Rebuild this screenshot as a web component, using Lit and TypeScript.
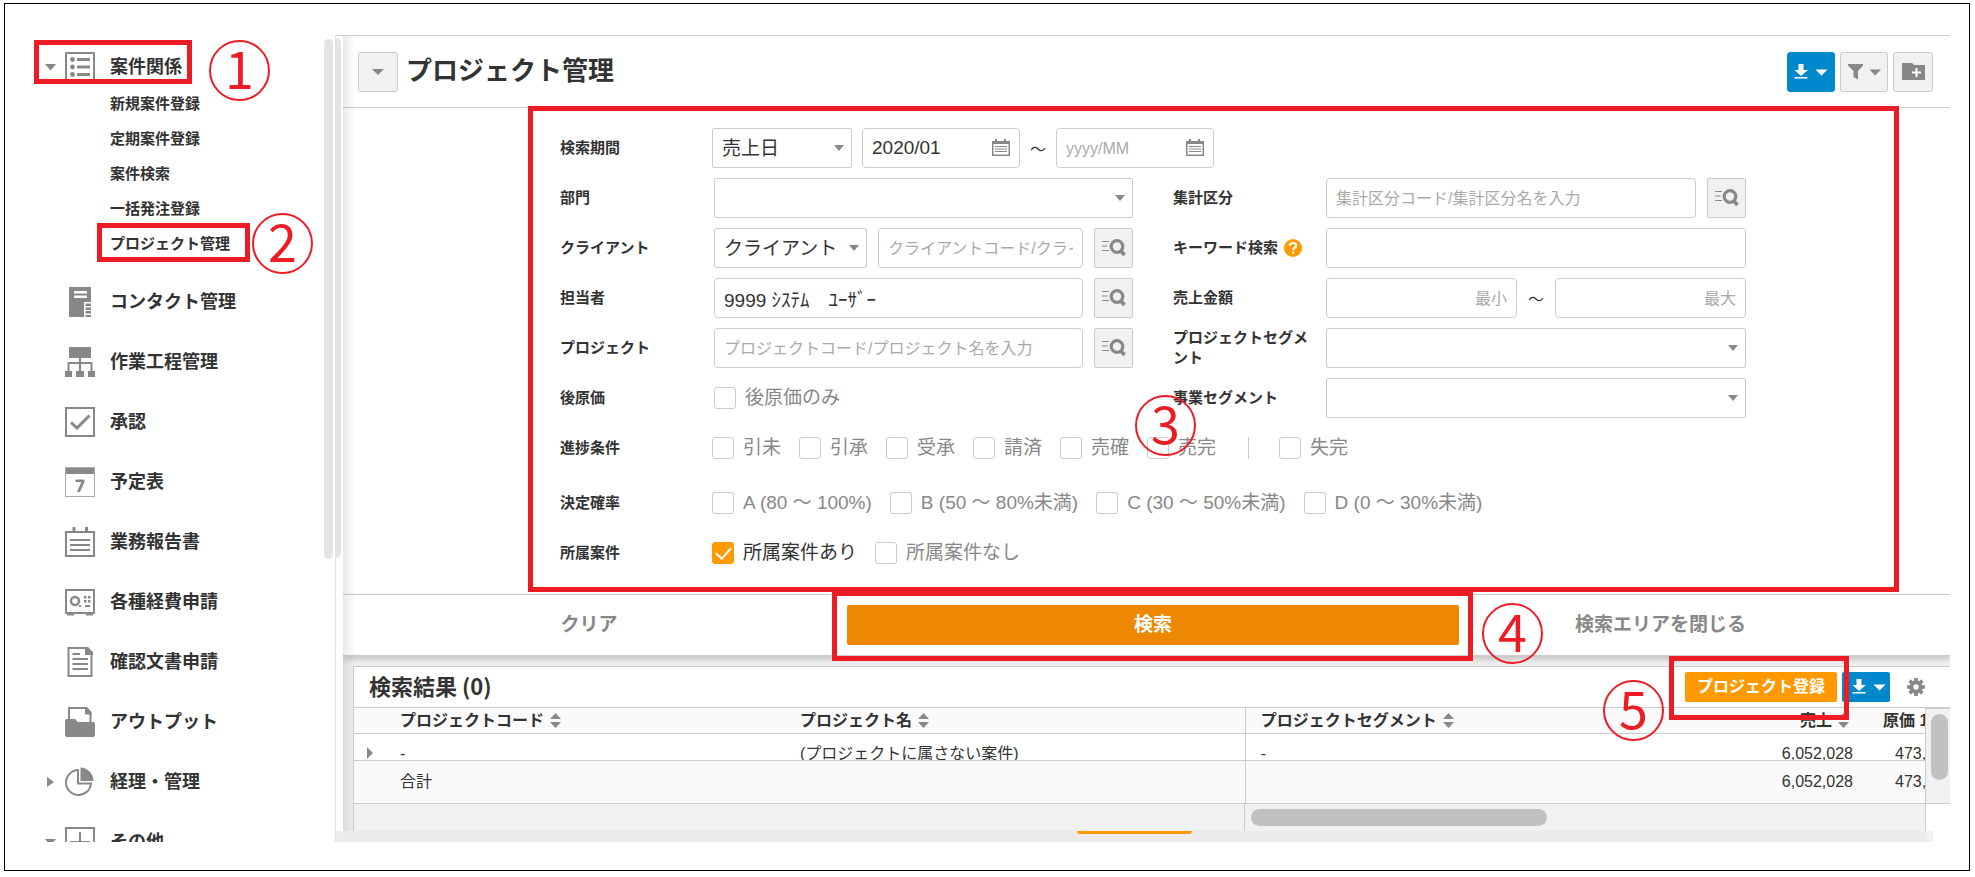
import { LitElement, html, css, svg, nothing } from "lit";
import { customElement } from "lit/decorators.js";
import { classMap } from "lit/directives/class-map.js";

const icons: Record<string, unknown> = {
  list: svg`<rect x="1" y="1" width="28" height="28" fill="none" stroke="#888" stroke-width="2"/>
    <circle cx="7.5" cy="7.5" r="2.4"/><circle cx="7.5" cy="15" r="2.4"/><circle cx="7.5" cy="22.5" r="2.4"/>
    <path d="M12 6h13v3H12zM12 13.500h13v3H12zM12 21h13v3H12z"/>`,
  contact: svg`<path fill-rule="evenodd" d="M4 0h22v15h-7v15H4zM9 4v2.500h13V4zM9 8.500V11h13V8.500z"/>
    <path d="M20.500 16.500H26v2.500h-5.500zM20.500 20.500H26V23h-5.500zM20.500 24H26v2.500h-5.500zM20.500 28H26v2h-5.500z"/>`,
  flow: svg`<path d="M4 0h22v11H4zM0 24h7v6H0zM11 24h8v6h-8zM23 24h7v6h-7z"/>
    <path d="M15 10v15M3.500 25v-9h23v9" fill="none" stroke="#888" stroke-width="2"/>`,
  check: svg`<rect x="1" y="1" width="28" height="28" fill="none" stroke="#888" stroke-width="2"/>
    <path d="M6 15.500l6 5.500L24.500 8.500" fill="none" stroke="#888" stroke-width="3"/>`,
  calendar: svg`<rect x="0.500" y="0.500" width="29" height="29" fill="#fff" stroke="#aaa"/>
    <path d="M1 1h28v6H1z"/><path d="M10.500 12.500h9v2.500l-4.500 10h-3l4.300-10h-5.800z"/>`,
  report: svg`<path d="M1 5h28v24H1z" fill="none" stroke="#888" stroke-width="2"/>
    <path d="M7.500 0h3v6h-3zM20 0h3v6h-3zM5 12h20v2H5zM5 17h20v2H5zM5 22h20v2H5z"/>`,
  safe: svg`<rect x="1" y="3" width="28" height="23" fill="none" stroke="#888" stroke-width="2"/>
    <circle cx="10" cy="14" r="4" fill="none" stroke="#888" stroke-width="2.500"/>
    <path d="M2 26h7v2.500H2zM21 26h7v2.500h-7zM14 18h2v2h-2zM19 9h2.500v2.500H19zM23 9h2.500v2.500H23zM19 13h2.500v2.500H19zM23 13h2.500v2.500H23zM20 18h5v2h-5z"/>`,
  document: svg`<path d="M3.500 1h18l5 5v23h-23z" fill="none" stroke="#888" stroke-width="2"/>
    <path d="M20 0h3l5 5v3h-8zM7.500 6h7.500v2H7.500zM7.500 11h15.500v2H7.500zM7.500 16h15.500v2H7.500zM7.500 21h15.500v2H7.500z"/>`,
  output: svg`<path d="M4 14V1h17l4.500 5v10" fill="none" stroke="#888" stroke-width="2"/>
    <path d="M20 0h2l4.500 5v2.500H20zM2 12h8l3 3h15q2 0 2 2v11q0 2-2 2H2q-2 0-2-2V14q0-2 2-2z"/>`,
  chart: svg`<path d="M13 3A12.500 12.500 0 1 0 26 16.500H13z" fill="none" stroke="#888" stroke-width="2"/>
    <path d="M15.500 0.500A13.500 13.500 0 0 1 28.500 14h-13z"/>`,
  other: svg`<rect x="1" y="1" width="28" height="28" fill="none" stroke="#888" stroke-width="2"/>
    <path d="M15 5v20M5 15h20" stroke="#888" stroke-width="2"/>`,
};

const navItems = [
  { icon: "contact", text: "コンタクト管理" },
  { icon: "flow", text: "作業工程管理" },
  { icon: "check", text: "承認" },
  { icon: "calendar", text: "予定表" },
  { icon: "report", text: "業務報告書" },
  { icon: "safe", text: "各種経費申請" },
  { icon: "document", text: "確認文書申請" },
  { icon: "output", text: "アウトプット" },
  { icon: "chart", text: "経理・管理", arrow: "right" },
  { icon: "other", text: "その他", arrow: "down" },
];

const subItems = ["新規案件登録", "定期案件登録", "案件検索", "一括発注登録", "プロジェクト管理"];

const base = css`
  :host, * { box-sizing: border-box; }
  a { color: inherit; text-decoration: none; }
  svg { display: block; flex: none; }
  button, input, select { font: inherit; color: inherit; margin: 0; }
`;

@customElement("side-menu")
class SideMenu extends LitElement {
  static styles = [base, css`
    :host { display: flex; flex: none; width: 331px; overflow: hidden; border-right: 1px solid #e4e4e4; padding-right: 2px; color: #333; }
    nav { flex: 1; padding-top: 17px; font-weight: 700; }
    ul { list-style: none; margin: 0; padding: 0; }
    .item { display: flex; align-items: center; height: 30px; font-size: 18px; line-height: 30px; margin-bottom: 30px; }
    .item.open { margin-bottom: 4px; }
    .mark { width: 60px; padding-left: 40px; flex: none; }
    .down, .right { display: block; border: 5px solid transparent; }
    .down { width: 11px; border-top: 6px solid #888; border-bottom: 0; }
    .right { width: 7px; margin-left: 2px; border-left: 7px solid #888; border-right: 0; }
    .name { margin-left: 15px; white-space: nowrap; }
    .sub { margin-bottom: 26px; padding-left: 105px; font-size: 15px; line-height: 35px; }
    .thumb { width: 9px; height: 520px; margin-top: 4px; border-radius: 5px; background: #e4e4e4; }
  `];

  private row(icon: string, text: string, arrow?: string) {
    return html`<a class=${classMap({ item: true, open: icon === "list" })} href="#">
      <span class="mark">${arrow ? html`<span class=${arrow}></span>` : nothing}</span>
      <svg width="30" height="30" viewBox="0 0 30 30" fill="#888" aria-hidden="true">${icons[icon]}</svg>
      <span class="name">${text}</span></a>`;
  }

  render() {
    return html`<nav>
      ${this.row("list", "案件関係", "down")}
      <ul class="sub">${subItems.map((t) => html`<li><a href="#">${t}</a></li>`)}</ul>
      <ul>${navItems.map((i) => html`<li>${this.row(i.icon, i.text, i.arrow)}</li>`)}</ul>
    </nav><div class="thumb"></div>`;
  }
}

const downloadIcon = html`<svg width="34" height="16" viewBox="0 0 34 16" fill="#fff" aria-hidden="true">
  <path d="M4.500 0h5v6h4.500L7 12 0.500 6h4zM0.500 13h13v1.500h-13zM21.500 5.500h12l-6 6z"/></svg>`;

const lookupIcon = html`<svg width="24" height="18" viewBox="0 0 24 18" aria-hidden="true">
  <path d="M0 2.500h7M0 7h5.500M0 11.500h7" stroke="#888" stroke-width="1"/>
  <circle cx="15" cy="7.500" r="5.800" fill="none" stroke="#888" stroke-width="3.200"/>
  <path d="M18.500 11.500l4 4.500" stroke="#888" stroke-width="3.800"/></svg>`;

@customElement("search-form")
class SearchForm extends LitElement {
  static styles = [base, css`
    :host { display: block; flex: none; color: #333; }
    form { display: grid; grid-template-columns: 1fr 1fr; gap: 10px 40px; max-width: 1199px; margin: 0 auto; padding: 20px 0 21px 13px; }
    .row { display: flex; align-items: center; height: 40px; min-width: 0; }
    .full { grid-column: 1 / -1; }
    .spaced { margin-top: 5px; }
    .caption { flex: none; width: 152px; font-size: 15px; font-weight: 700; line-height: 20px; display: flex; align-items: center; gap: 6px; }
    .right .caption { padding-right: 16px; }
    .fields { flex: 1; display: flex; align-items: center; min-width: 0; gap: 11px; padding-left: 2px; font-size: 19px; }
    .right .fields { padding-left: 1px; }
    .full .fields { padding-left: 0; gap: 10px; }
    .box { width: 100%; min-width: 0; height: 40px; padding: 0 9px; border: 1px solid #ccc; border-radius: 4px; background: #fff; outline: 0; text-overflow: clip; }
    .box::placeholder { font-size: 16px; color: #aaa; opacity: 1; }
    .num { text-align: right; }
    .select, .date { position: relative; flex: 1; min-width: 0; }
    .select.kind { flex: none; width: 140px; }
    .select.client { flex: none; width: 153px; }
    .date { flex: none; width: 158px; }
    .select select { appearance: none; border-radius: 2px; padding: 0 24px 0 9px; display: block; }
    .select::after { content: ""; position: absolute; right: 8px; top: 17px; border: 5px solid transparent; border-top: 6px solid #888; border-bottom: 0; pointer-events: none; }
    .date svg { position: absolute; right: 10px; top: 11px; }
    .wave { flex: none; width: 16px; font-size: 16px; text-align: center; }
    .lookup { flex: none; width: 39px; height: 40px; padding: 0; display: flex; align-items: center; justify-content: center; background: #f1f1f1; border: 1px solid #ccc; border-radius: 2px; }
    .checks { color: #888; }
    .full .checks { gap: 18px; }
    .check { display: flex; align-items: center; gap: 9px; line-height: 24px; white-space: nowrap; }
    .check input { appearance: none; width: 22px; height: 22px; border: 1px solid #ccc; border-radius: 3px; background: #fff; display: grid; place-items: center; }
    .check input:checked { background: #f90; border-color: #f90; }
    .check input:checked::after { content: ""; width: 7px; height: 13px; margin-top: -4px; border: solid #fff; border-width: 0 2px 2px 0; transform: rotate(42deg); }
    .on { color: #333; }
    .bar { width: 1px; height: 22px; background: #ccc; margin: 0 12px 0 14px; }
  `];

  private check(text: string, on = false) {
    return html`<label class=${classMap({ check: true, on })}><input type="checkbox" ?checked=${on}>${text}</label>`;
  }

  private date(label: string, value: string) {
    return html`<span class="date"><input class="box" aria-label=${label} placeholder="yyyy/MM" .value=${value}>
      <svg width="18" height="17" viewBox="0 0 18 17" fill="#888" aria-hidden="true">
        <path fill-rule="evenodd" d="M0 2h3V0h2v2h7V0h2v2h4v15H0zM1.500 5v10.500h15V5z"/>
        <path d="M3 7h12v1H3zM3 9.500h12v1H3zM3 12h12v1H3z"/></svg></span>`;
  }

  private lookup(label: string) {
    return html`<button type="button" class="lookup" aria-label=${label}>${lookupIcon}</button>`;
  }

  render() {
    return html`<form @submit=${(e: Event) => e.preventDefault()}>
      <div class="row full"><label class="caption" for="kind">検索期間</label><div class="fields">
        <span class="select kind"><select class="box" id="kind"><option>売上日</option></select></span>
        ${this.date("開始月", "2020/01")}<span class="wave">～</span>${this.date("終了月", "")}</div></div>

      <div class="row"><label class="caption" for="dept">部門</label><div class="fields">
        <span class="select"><select class="box" id="dept"><option></option></select></span></div></div>
      <div class="row right"><label class="caption" for="group">集計区分</label><div class="fields">
        <input class="box" id="group" placeholder="集計区分コード/集計区分名を入力">${this.lookup("集計区分")}</div></div>

      <div class="row"><label class="caption" for="client">クライアント</label><div class="fields">
        <span class="select client"><select class="box" id="client"><option>クライアント</option></select></span>
        <input class="box" aria-label="クライアント名" placeholder="クライアントコード/クライアント名を入力">${this.lookup("クライアント")}</div></div>
      <div class="row right"><label class="caption" for="word">キーワード検索
        <svg width="18" height="18" viewBox="0 0 18 18" aria-hidden="true"><circle cx="9" cy="9" r="9" fill="#f90"/>
          <path d="M5.800 7q0-3 3.200-3t3.200 2.500q0 1.500-1.600 2.300T9 11.200" fill="none" stroke="#fff" stroke-width="2.200"/><path d="M8 12.500h2.200v2.200H8z" fill="#fff"/></svg>
        </label><div class="fields"><input class="box" id="word"></div></div>

      <div class="row"><label class="caption" for="staff">担当者</label><div class="fields">
        <input class="box" id="staff" .value=${"9999 ｼｽﾃﾑ　ﾕｰｻﾞｰ"}>${this.lookup("担当者")}</div></div>
      <div class="row right"><label class="caption" for="min">売上金額</label><div class="fields">
        <input class="box num" id="min" placeholder="最小"><span class="wave">～</span>
        <input class="box num" aria-label="最大" placeholder="最大"></div></div>

      <div class="row"><label class="caption" for="project">プロジェクト</label><div class="fields">
        <input class="box" id="project" placeholder="プロジェクトコード/プロジェクト名を入力">${this.lookup("プロジェクト")}</div></div>
      <div class="row right"><label class="caption" for="pseg">プロジェクトセグメント</label><div class="fields">
        <span class="select"><select class="box" id="pseg"><option></option></select></span></div></div>

      <div class="row"><span class="caption">後原価</span><div class="fields checks">
        ${this.check("後原価のみ")}</div></div>
      <div class="row right"><label class="caption" for="bseg">事業セグメント</label><div class="fields">
        <span class="select"><select class="box" id="bseg"><option></option></select></span></div></div>

      <div class="row full"><span class="caption">進捗条件</span><div class="fields checks">
        ${["引未", "引承", "受承", "請済", "売確", "売完"].map((t) => this.check(t))}<span class="bar"></span>${this.check("失完")}</div></div>
      <div class="row full spaced"><span class="caption">決定確率</span><div class="fields checks">
        ${["A (80 ～ 100%)", "B (50 ～ 80%未満)", "C (30 ～ 50%未満)", "D (0 ～ 30%未満)"].map((t) => this.check(t))}</div></div>
      <div class="row full"><span class="caption">所属案件</span><div class="fields checks">
        ${this.check("所属案件あり", true)}${this.check("所属案件なし")}</div></div>
    </form>`;
  }
}

@customElement("result-list")
class ResultList extends LitElement {
  static styles = [base, css`
    :host { display: flex; flex-direction: column; border: 1px solid #ccc; border-width: 1px 0 0 1px; background: #fff; color: #333; font-size: 16px; }
    .top { display: flex; align-items: center; height: 40px; padding: 0 25px 0 15px; }
    h2 { flex: 1; margin: 0 0 4px; font: 700 22px/36px "Noto Sans CJK JP", sans-serif; }
    .add, .dl { height: 30px; border: 0; border-radius: 2px; padding: 0; color: #fff; }
    .add { width: 152px; background: #f90; font-weight: 700; line-height: 28px; }
    .dl { width: 48px; margin-left: 5px; background: #08c; padding-left: 10px; }
    .gear { margin-left: 17px; padding: 0; border: 0; background: none; }
    .grid { display: grid; grid-template-columns: minmax(0, 1fr) 25px; border-top: 1px solid #ccc; }
    table { width: 100%; table-layout: fixed; border-collapse: separate; border-spacing: 0; }
    th, td { padding: 0 0 0 14px; text-align: left; font-weight: 400; overflow: hidden; white-space: nowrap; border-bottom: 1px solid #ccc; }
    th { height: 26px; background: #fafafa; font-weight: 700; line-height: 24px; }
    .sort { display: inline-block; vertical-align: -2px; margin-left: 6px; }
    .code { width: 27.5%; padding-left: 46px; }
    .name { width: 29.2%; }
    .seg { border-left: 1px solid #ccc; padding-left: 15px; }
    .sales { width: 140px; text-align: right; padding-right: 14px; }
    th.sales { padding-right: 18px; }
    .cost { width: 58px; padding-left: 28px; text-overflow: clip; }
    th.cost { padding-left: 16px; }
    .clip { display: flex; align-items: flex-start; height: 26px; overflow: hidden; line-height: 40px; }
    .sales .clip { justify-content: flex-end; }
    td.code { position: relative; }
    .expand { position: absolute; left: 13px; top: 13px; width: 6px; height: 12px; padding: 0; border: solid transparent; border-width: 6px 0 6px 6px; border-left-color: #888; background: none; }
    tfoot td { height: 43px; background: #fafafa; line-height: 40px; }
    .vscroll { border: solid #ccc; border-width: 1px 0 1px 1px; background: #f1f1f1; padding: 5px 2px 0 5px; }
    .vthumb { height: 66px; border-radius: 9px; background: #c1c1c1; }
    .hscroll { display: flex; height: 27px; background: #f1f1f1; border-right: 1px solid #ccc; margin-right: 24px; }
    .fixed { width: 56.700%; border-right: 1px solid #ccc; }
    .hthumb { width: 296px; height: 17px; margin: 5px 0 0 6px; border-radius: 9px; background: #c1c1c1; }
  `];

  private sort() {
    return html`<svg class="sort" width="11" height="15" viewBox="0 0 11 15" fill="#888" aria-hidden="true"><path d="M5.500 0L11 6H0zM0 9h11l-5.500 6z"/></svg>`;
  }

  render() {
    return html`
      <div class="top"><h2>検索結果 (0)</h2>
        <button class="add">プロジェクト登録</button>
        <button class="dl" aria-label="ダウンロード">${downloadIcon}</button>
        <button class="gear" aria-label="設定"><svg width="18" height="18" viewBox="0 0 18 18" aria-hidden="true">
          <circle cx="9" cy="9" r="4.700" fill="none" stroke="#888" stroke-width="4"/>
          ${[0, 45, 90, 135].map((a) => svg`<path d="M7.200 0h3.600v3H7.200zM7.200 15h3.600v3H7.200z" fill="#888" transform="rotate(${a} 9 9)"/>`)}</svg></button>
      </div>
      <div class="grid">
        <table>
          <thead><tr><th class="code">プロジェクトコード${this.sort()}</th><th class="name">プロジェクト名${this.sort()}</th>
            <th class="seg">プロジェクトセグメント${this.sort()}</th><th class="sales">売上${this.sort()}</th><th class="cost">原価 1</th></tr></thead>
          <tbody><tr><td class="code"><button class="expand" aria-label="展開"></button><div class="clip">-</div></td>
            <td class="name"><div class="clip">(プロジェクトに属さない案件)</div></td><td class="seg"><div class="clip">-</div></td>
            <td class="sales"><div class="clip">6,052,028</div></td><td class="cost"><div class="clip">473,</div></td></tr></tbody>
          <tfoot><tr><td class="code">合計</td><td class="name"></td><td class="seg"></td><td class="sales">6,052,028</td><td class="cost">473,</td></tr></tfoot>
        </table>
        <div class="vscroll"><div class="vthumb"></div></div>
      </div>
      <div class="hscroll"><div class="fixed"></div><div class="hthumb"></div></div>`;
  }
}

@customElement("app-root")
class AppRoot extends LitElement {
  static styles = [base, css`
    :host { display: flow-root; background: #fff; color: #333; font-family: "Liberation Sans", "Noto Sans CJK JP", sans-serif; }
    .frame { position: relative; display: flex; height: calc(100vh - 9px); margin: 3px 5px 6px 4px; padding: 31px 19px 28px 0; border: 1px solid #000; overflow: hidden; }
    .gutter { flex: none; width: 7px; display: flex; flex-direction: column; justify-content: space-between; border-top: 1px solid #ccc; }
    .thumb { width: 5px; height: 520px; margin-top: 2px; border-radius: 0 5px 5px 0; background: #e4e4e4; }
    .corner { height: 11px; background: #ededed; }
    main { position: relative; flex: 1; min-width: 0; display: flex; flex-direction: column; border-top: 1px solid #ccc; overflow: hidden; }
    main::before { content: ""; position: absolute; z-index: 2; left: 0; top: 0; bottom: 11px; width: 12px; background: linear-gradient(90deg, rgba(0,0,0,.09), rgba(0,0,0,0)); pointer-events: none; }
    header { flex: none; display: flex; align-items: center; height: 72px; padding: 0 17px 0 15px; border-bottom: 1px solid #ccc; gap: 5px; }
    h1 { flex: 1; margin: 0 0 2px 3px; font-size: 26px; line-height: 36px; font-weight: 700; }
    .tool { display: flex; align-items: center; justify-content: center; height: 40px; padding: 0; border: 1px solid #ccc; border-radius: 3px; background: #f1f1f1; }
    .w40 { width: 40px; }
    .w48 { width: 48px; }
    .blue { background: #08c; border-color: #08c; }
    .caret { border: 6px solid transparent; border-top-color: #888; border-bottom: 0; }
    .actions { position: relative; z-index: 1; flex: none; display: grid; grid-template-columns: 492fr 636fr 379fr 100fr; align-items: center; height: 62px; border: solid #ccc; border-width: 1px 0; background: #fff; box-shadow: 0 3px 6px rgba(0,0,0,.2); font-size: 19px; }
    .actions button { height: 40px; padding: 0 0 4px; border: 0; border-radius: 2px; background: none; color: #888; font-weight: 700; margin-bottom: 1px; }
    .actions .go { margin-left: 12px; margin-right: 12px; background: #e80; color: #fff; }
    .results { flex: 1; min-height: 0; padding: 10px 0 0 10px; background: #efefef; }
    .foot { flex: none; height: 11px; margin-right: 17px; display: flex; justify-content: center; background: #ebebeb; border-right: 7px solid #f1f1f1; }
    .sliver { width: 115px; height: 3px; border-radius: 0 0 3px 3px; background: #f90; }
    .note { position: absolute; z-index: 3; border: 5px solid #ed1c24; pointer-events: none; }
    .n1 { left: 29px; top: 36px; width: 158px; height: 44px; }
    .n2 { left: 92px; top: 219px; width: 153px; height: 39px; }
    .n3 { left: 523px; top: 102px; width: 1371px; height: 486px; }
    .n4 { left: 827px; top: 587px; width: 641px; height: 70px; }
    .n5 { left: 1664px; top: 652px; width: 180px; height: 64px; }
    .num { position: absolute; z-index: 3; width: 61px; height: 61px; border: 2px solid #ed1c24; border-radius: 50%; color: #ed1c24; font: 400 52px/50px "Noto Sans CJK JP", sans-serif; text-align: center; pointer-events: none; }
    .c1 { left: 204px; top: 36px; }
    .c2 { left: 247px; top: 209px; }
    .c3 { left: 1130px; top: 391px; }
    .c4 { left: 1477px; top: 599px; }
    .c5 { left: 1598px; top: 676px; }
  `];

  render() {
    return html`<div class="frame">
      <side-menu></side-menu>
      <div class="gutter"><div class="thumb"></div><div class="corner"></div></div>
      <main>
        <header>
          <button class="tool w40" aria-label="メニュー"><span class="caret"></span></button>
          <h1>プロジェクト管理</h1>
          <button class="tool w48 blue" aria-label="ダウンロード">${downloadIcon}</button>
          <button class="tool w48" aria-label="フィルター"><svg width="34" height="16" viewBox="0 0 34 16" fill="#888" aria-hidden="true">
            <path d="M1 0h15v1.500L11 7v8.500L6.500 13V7L1 1.500zM22.500 5.500h11.500L28.200 11.500z"/></svg></button>
          <button class="tool w40" aria-label="フォルダー追加"><svg width="23" height="19" viewBox="0 0 23 19" aria-hidden="true">
            <path d="M0 1h10l2 2h11v15H0z" fill="#888"/><path d="M14.500 6v9M10 10.500h9" stroke="#fff" stroke-width="2"/></svg></button>
        </header>
        <search-form></search-form>
        <div class="actions"><button>クリア</button><button class="go">検索</button><button>検索エリアを閉じる</button></div>
        <div class="results"><result-list></result-list></div>
        <div class="foot"><div class="sliver"></div></div>
      </main>
      ${[1, 2, 3, 4, 5].map((n) => html`<div class="note n${n}"></div><div class="num c${n}">${n}</div>`)}
    </div>`;
  }
}
